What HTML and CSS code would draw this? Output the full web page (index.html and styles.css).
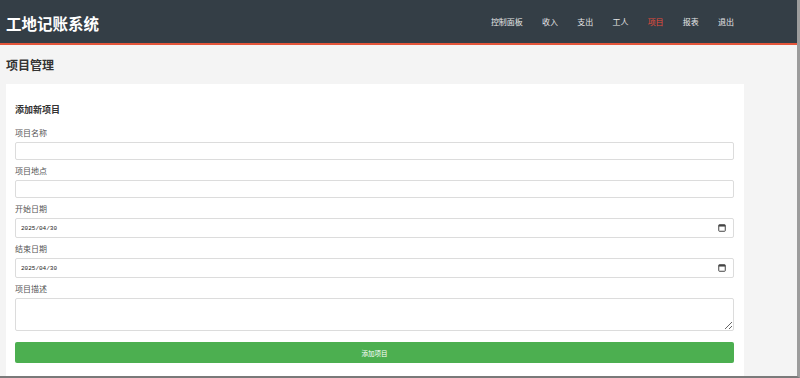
FILE: index.html
```html
<!DOCTYPE html>
<html lang="zh">
<head>
<meta charset="utf-8">
<title>项目管理</title>
<link rel="stylesheet" href="styles.css">
</head>
<body>
<div class="window">
  <header class="topbar">
    <div class="container bar-inner">
      <h1 class="logo">工地记账系统</h1>
      <nav class="nav">
        <a href="#">控制面板</a>
        <a href="#">收入</a>
        <a href="#">支出</a>
        <a href="#">工人</a>
        <a href="#" class="active">项目</a>
        <a href="#">报表</a>
        <a href="#">退出</a>
      </nav>
    </div>
  </header>
  <main class="container">
    <h2 class="page-title">项目管理</h2>
    <section class="card">
      <h3 class="card-title">添加新项目</h3>
      <form class="form">
        <div class="group">
          <label>项目名称</label>
          <input class="field" type="text">
        </div>
        <div class="group">
          <label>项目地点</label>
          <input class="field" type="text">
        </div>
        <div class="group">
          <label>开始日期</label>
          <div class="date">
            <input class="field date-field" type="text" value="2025/04/30">
            <svg class="cal" width="8" height="8" viewBox="0 0 8 8"><rect x="0.75" y="0.75" width="6.5" height="6.5" rx="0.6" fill="none" stroke="#444" stroke-width="1"/><rect x="0.75" y="0.75" width="6.5" height="1.8" fill="#444"/></svg>
          </div>
        </div>
        <div class="group">
          <label>结束日期</label>
          <div class="date">
            <input class="field date-field" type="text" value="2025/04/30">
            <svg class="cal" width="8" height="8" viewBox="0 0 8 8"><rect x="0.75" y="0.75" width="6.5" height="6.5" rx="0.6" fill="none" stroke="#444" stroke-width="1"/><rect x="0.75" y="0.75" width="6.5" height="1.8" fill="#444"/></svg>
          </div>
        </div>
        <div class="group">
          <label>项目描述</label>
          <textarea class="field area"></textarea>
        </div>
        <button type="button" class="btn">添加项目</button>
      </form>
    </section>
  </main>
</div>
</body>
</html>
```

FILE: styles.css
```css
html, body {
  margin: 0;
  padding: 0;
}
body {
  background: #f4f4f4;
  font-family: "Noto Sans CJK SC", "Noto Sans", sans-serif;
  color: #333;
}
.window {
  height: 378px;
  box-sizing: border-box;
  overflow: hidden;
  border-right: 3px solid #9c9c9c;
  border-bottom: 2px solid #7a7a7a;
}
.container {
  width: 738px;
  margin-left: 6px;
}
.topbar {
  background: #343e46;
  height: 43px;
  border-bottom: 2px solid #e4553a;
}
.bar-inner {
  height: 43px;
  display: flex;
  align-items: center;
  justify-content: space-between;
}
.logo {
  margin: 3px 0 0;
  font-size: 15.5px;
  line-height: 20px;
  font-weight: 700;
  color: #fff;
}
.nav {
  display: flex;
  align-items: center;
  margin-top: 1px;
}
.nav a {
  color: #e6e6e6;
  text-decoration: none;
  font-size: 8px;
  line-height: 12px;
  padding: 0 9.6px;
}
.nav a:last-child {
  padding-right: 10px;
}
.nav a.active {
  color: #e74c3c;
}
.page-title {
  margin: 12px 0 11px;
  font-size: 12px;
  line-height: 16px;
  font-weight: 700;
  color: #333;
}
.card {
  background: #fff;
  padding: 20px 10px 20px 9px;
  height: 400px;
}
.card-title {
  margin: 0 0 11px;
  font-size: 9px;
  line-height: 12px;
  font-weight: 700;
  color: #333;
}
.form {
  display: flex;
  flex-direction: column;
}
.group {
  display: flex;
  flex-direction: column;
  margin-bottom: 5px;
}
.group label {
  font-size: 8px;
  line-height: 12px;
  color: #555;
  margin-bottom: 3px;
}
.field {
  display: block;
  box-sizing: border-box;
  width: 100%;
  height: 18px;
  margin: 0;
  border: 1px solid #dcdcdc;
  border-radius: 2px;
  background: #fff;
  padding: 0 5px;
  font-family: "Liberation Mono", monospace;
  font-size: 6px;
  color: #222;
  outline: none;
}
.date {
  position: relative;
}
.date-field {
  height: 20px;
}
.cal {
  position: absolute;
  right: 8px;
  top: 6px;
}
.area {
  height: 33px;
  resize: vertical;
  padding: 3px 5px;
}
.btn {
  margin-top: 6px;
  height: 21px;
  border: none;
  border-radius: 2px;
  background: #4caf50;
  color: #fff;
  font-family: "Noto Sans CJK SC", sans-serif;
  font-size: 6.5px;
  cursor: pointer;
}
```
